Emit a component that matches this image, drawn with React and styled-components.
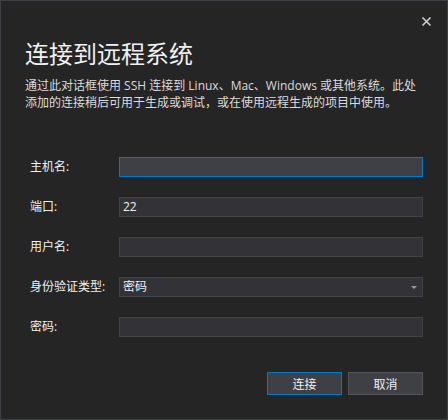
import React from 'react';
import styled, { createGlobalStyle } from 'styled-components';

const GlobalStyle = createGlobalStyle`
  html, body {
    margin: 0;
    padding: 0;
    background: #252526;
  }
  * {
    box-sizing: border-box;
  }
`;

const FONT = `"Open Sans", "Noto Sans CJK SC", sans-serif`;

const Dialog = styled.div`
  width: 448px;
  height: 420px;
  background: #252526;
  border: 1px solid #3f3f46;
  display: flex;
  flex-direction: column;
  font-family: ${FONT};
  color: #f1f1f1;
`;

const TopBar = styled.div`
  height: 36px;
  display: flex;
  justify-content: flex-end;
  align-items: flex-start;
  padding: 15px 15px 0 0;
`;

const CloseButton = styled.button`
  width: 11px;
  height: 11px;
  padding: 0;
  border: none;
  background: transparent;
  display: flex;
  cursor: pointer;
`;

const Header = styled.div`
  padding: 0 24px;
`;

const Title = styled.h1`
  margin: 0;
  font-size: 24px;
  font-weight: 400;
  line-height: 32px;
  color: #f1f1f1;
  font-family: "Noto Sans CJK SC", sans-serif;
`;

const Description = styled.p`
  margin: 8px 0 0;
  font-size: 12px;
  line-height: 17px;
  color: #dcdcdc;
  font-family: ${FONT};
  white-space: nowrap;
`;

const Form = styled.div`
  margin-top: 46px;
  padding: 0 24px 0 29px;
  display: grid;
  grid-template-columns: 89px 1fr;
  row-gap: 20px;
  align-items: center;
`;

const Label = styled.label`
  font-size: 12px;
  line-height: 20px;
  color: #f1f1f1;
  font-family: ${FONT};
`;

const Field = styled.div`
  position: relative;
  height: 20px;
  background: ${({ $focused }) => ($focused ? '#3f3f46' : '#333337')};
  border: 1px solid ${({ $focused }) => ($focused ? '#007acc' : '#434346')};
  font-size: 12px;
  line-height: 18px;
  padding: 0 3px;
  color: #f1f1f1;
  font-family: ${FONT};
`;

const Arrow = styled.span`
  position: absolute;
  right: 5px;
  top: 8px;
  width: 0;
  height: 0;
  border-left: 3px solid transparent;
  border-right: 3px solid transparent;
  border-top: 3px solid #999999;
`;

const Footer = styled.div`
  margin-top: auto;
  padding: 0 24px 24px;
  display: flex;
  justify-content: flex-end;
  gap: 6px;
`;

const Button = styled.button`
  width: 75px;
  height: 23px;
  padding: 0;
  background: #3f3f46;
  border: 1px solid ${({ $primary }) => ($primary ? '#007acc' : '#555555')};
  color: #f1f1f1;
  font-size: 12px;
  font-family: "Noto Sans CJK SC", sans-serif;
  line-height: 21px;
  cursor: pointer;
`;

const CloseIcon = () => (
  <svg width="11" height="11" viewBox="0 0 11 11">
    <path d="M1.5 1.5 L9.5 9.5 M9.5 1.5 L1.5 9.5" stroke="#d0d0d0" strokeWidth="1.6" fill="none" />
  </svg>
);

const fields = [
  { label: '主机名:', value: '', focused: true },
  { label: '端口:', value: '22' },
  { label: '用户名:', value: '' },
  { label: '身份验证类型:', value: '密码', select: true },
  { label: '密码:', value: '' },
];

const App = () => (
  <>
    <GlobalStyle />
    <Dialog>
      <TopBar>
        <CloseButton aria-label="关闭">
          <CloseIcon />
        </CloseButton>
      </TopBar>
      <Header>
        <Title>连接到远程系统</Title>
        <Description>
          通过此对话框使用 SSH 连接到 Linux、Mac、Windows 或其他系统。此处
          <br />
          添加的连接稍后可用于生成或调试，或在使用远程生成的项目中使用。
        </Description>
      </Header>
      <Form>
        {fields.map(({ label, value, focused, select }) => (
          <React.Fragment key={label}>
            <Label>{label}</Label>
            <Field $focused={focused}>
              {value}
              {select && <Arrow />}
            </Field>
          </React.Fragment>
        ))}
      </Form>
      <Footer>
        <Button $primary>连接</Button>
        <Button>取消</Button>
      </Footer>
    </Dialog>
  </>
);

export default App;
